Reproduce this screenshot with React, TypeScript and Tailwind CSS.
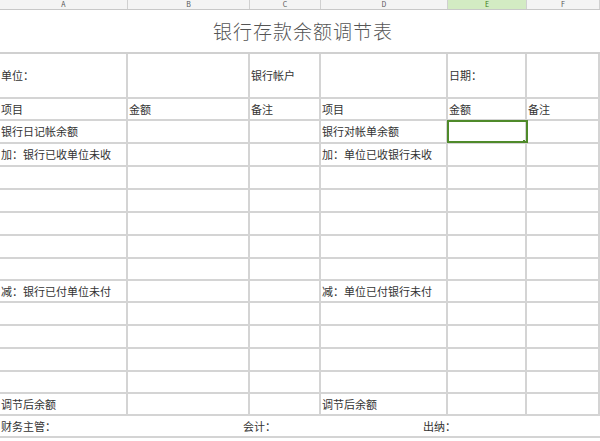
const cols = [128, 122, 71, 127, 79, 73];
const letters = ['A', 'B', 'C', 'D', 'E', 'F'];

type Row = { h: number; cells: string[]; sel?: boolean };

const rows: Row[] = [
  { h: 45, cells: ['单位：', '', '银行帐户', '', '日期：', ''] },
  { h: 22, cells: ['项目', '金额', '备注', '项目', '金额', '备注'] },
  { h: 23, cells: ['银行日记帐余额', '', '', '银行对帐单余额', '', ''], sel: true },
  { h: 23, cells: ['加：银行已收单位未收', '', '', '加：单位已收银行未收', '', ''] },
  { h: 23, cells: ['', '', '', '', '', ''] },
  { h: 23, cells: ['', '', '', '', '', ''] },
  { h: 23, cells: ['', '', '', '', '', ''] },
  { h: 23, cells: ['', '', '', '', '', ''] },
  { h: 22, cells: ['', '', '', '', '', ''] },
  { h: 22, cells: ['减：银行已付单位未付', '', '', '减：单位已付银行未付', '', ''] },
  { h: 23, cells: ['', '', '', '', '', ''] },
  { h: 23, cells: ['', '', '', '', '', ''] },
  { h: 23, cells: ['', '', '', '', '', ''] },
  { h: 22, cells: ['', '', '', '', '', ''] },
  { h: 22, cells: ['调节后余额', '', '', '调节后余额', '', ''] },
];

export default function App() {
  return (
    <div
      className="w-[600px] h-[441px] overflow-hidden bg-white text-[11px] text-[#333]"
      style={{ fontFamily: '"Noto Sans CJK SC", "Liberation Sans", sans-serif' }}
    >
      <div className="flex h-[10px] bg-[#f4f4f4] border-b border-[#c8c8c8]">
        {letters.map((l, i) => (
          <div
            key={l}
            style={{ width: cols[i] }}
            className={`shrink-0 border-r border-[#d0d0d0] flex items-center justify-center text-[7px] leading-none font-['Liberation_Serif',serif] ${
              l === 'E' ? 'bg-[#d3ebc3] text-[#3a7a1a]' : 'text-[#555]'
            }`}
          >
            {l}
          </div>
        ))}
      </div>
      <div className="h-[44px] border-b-2 border-[#d0d0d0] flex items-center justify-center">
        <span className="text-[19px] font-light text-[#555] tracking-[1px] ml-[6px]">银行存款余额调节表</span>
      </div>
      {rows.map((r, ri) => (
        <div key={ri} className="flex border-b-2 border-[#d4d4d4]" style={{ height: r.h }}>
          {r.cells.map((c, ci) => (
            <div
              key={ci}
              style={{ width: cols[ci] }}
              className={`shrink-0 border-r-2 border-[#d4d4d4] flex items-center pl-[1px] whitespace-nowrap overflow-hidden relative ${
                r.sel && ci === 4 ? 'outline-2 outline-[#4f8a2a] -outline-offset-1' : ''
              }`}
            >
              {c}
              {r.sel && ci === 4 && (
                <span className="absolute right-[-2px] bottom-[-2px] w-[4px] h-[4px] bg-[#4f8a2a]" />
              )}
            </div>
          ))}
        </div>
      ))}
      <div className="flex items-center h-[22px] border-b-2 border-[#d4d4d4]">
        <span className="w-[243px] pl-[1px]">财务主管：</span>
        <span className="w-[180px]">会计：</span>
        <span>出纳：</span>
      </div>
    </div>
  );
}
